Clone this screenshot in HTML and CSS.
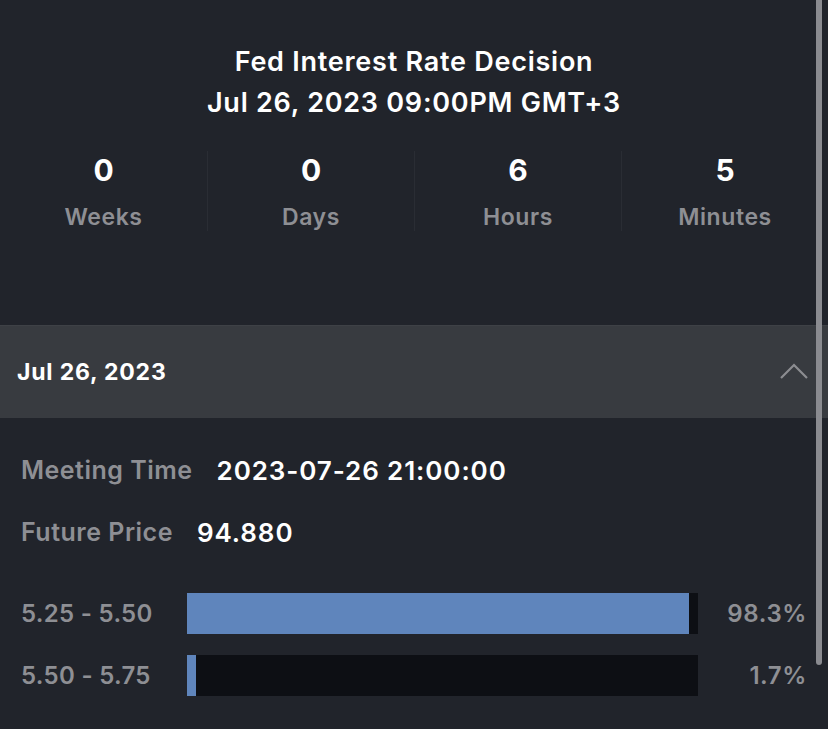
FILE: index.html
```html
<!DOCTYPE html>
<html>
<head>
<meta charset="utf-8">
<link rel="stylesheet" href="styles.css">
</head>
<body>
<div class="page">
  <header class="event">
    <h1 class="event-title">Fed Interest Rate Decision<br>Jul 26, 2023 09:00PM GMT+3</h1>
    <div class="countdown">
      <div class="cd-cell"><div class="cd-num">0</div><div class="cd-label">Weeks</div></div>
      <div class="cd-cell"><div class="cd-num">0</div><div class="cd-label">Days</div></div>
      <div class="cd-cell"><div class="cd-num">6</div><div class="cd-label">Hours</div></div>
      <div class="cd-cell"><div class="cd-num">5</div><div class="cd-label">Minutes</div></div>
    </div>
  </header>
  <section class="meeting">
    <div class="meeting-head">
      <span class="meeting-date">Jul 26, 2023</span>
      <svg class="chevron" width="30" height="18" viewBox="0 0 30 18"><path d="M2 16 L15 3 L28 16" fill="none" stroke="#8c8d91" stroke-width="2.2"/></svg>
    </div>
    <div class="meeting-body">
      <div class="info-row"><span class="info-label">Meeting Time</span><span class="info-value">2023-07-26 21:00:00</span></div>
      <div class="info-row"><span class="info-label">Future Price</span><span class="info-value">94.880</span></div>
      <div class="probs">
        <div class="prob-row">
          <span class="prob-label">5.25 - 5.50</span>
          <div class="track"><div class="fill" style="width:98.3%"></div></div>
          <span class="prob-pct">98.3%</span>
        </div>
        <div class="prob-row">
          <span class="prob-label">5.50 - 5.75</span>
          <div class="track"><div class="fill" style="width:1.7%"></div></div>
          <span class="prob-pct">1.7%</span>
        </div>
      </div>
    </div>
  </section>
  <div class="scrollbar"></div>
</div>
</body>
</html>
```
FILE: styles.css
```css
* { box-sizing: border-box; }
html, body { margin: 0; padding: 0; }
body {
  background: #21242b;
  font-family: Inter, "Liberation Sans", sans-serif;
  color: #fff;
  width: 828px;
  height: 729px;
  overflow: hidden;
}
.page { position: relative; width: 828px; height: 729px; }
.event { padding-top: 41px; height: 325px; }
.event-title {
  margin: 0;
  text-align: center;
  font-size: 27px;
  font-weight: 600;
  line-height: 41px;
  letter-spacing: 0.75px;
}
.countdown {
  display: grid;
  grid-template-columns: repeat(4, 1fr);
  margin-top: 28px;
}
.cd-cell {
  display: flex;
  flex-direction: column;
  align-items: center;
  border-left: 1px solid #2a2d34;
  height: 80px;
}
.cd-cell:first-child { border-left: none; }
.cd-num { font-size: 30px; font-weight: 700; line-height: 38px; }
.cd-label { font-size: 23px; font-weight: 600; color: #8e8f94; line-height: 32px; margin-top: 12px; letter-spacing: 0.6px; }
.meeting-head {
  background: #383b40;
  height: 93px;
  display: flex;
  align-items: center;
  justify-content: space-between;
  padding: 0 19px 0 17px;
  border-top: 1px solid #3e4146;
}
.meeting-date { font-size: 23px; font-weight: 700; letter-spacing: 0.8px; }
.chevron { margin-top: -2px; }
.meeting-body { padding: 30px 21px 0 21px; }
.info-row { display: flex; align-items: center; gap: 24px; height: 44px; margin-bottom: 18px; font-size: 25px; font-weight: 600; letter-spacing: 0.5px; }
.info-label { color: #8e8f94; }
.info-value { color: #fff; font-size: 26px; letter-spacing: 0.9px; }
.probs { margin-top: 39px; display: flex; flex-direction: column; gap: 21px; }
.prob-row { display: flex; align-items: center; height: 41px; }
.prob-label { width: 166px; font-size: 24px; font-weight: 600; color: #8e8f94; letter-spacing: 0.3px; }
.track { width: 511px; height: 41px; background: #0d0f14; }
.fill { height: 100%; background: #5f85bc; }
.prob-pct { flex: 1; text-align: right; font-size: 24px; font-weight: 600; color: #8e8f94; letter-spacing: 0.6px; }
.scrollbar {
  position: absolute;
  right: 6px;
  top: 0;
  width: 6px;
  height: 665px;
  background: #8a8b90;
  border-radius: 0 0 3px 3px;
}
```
